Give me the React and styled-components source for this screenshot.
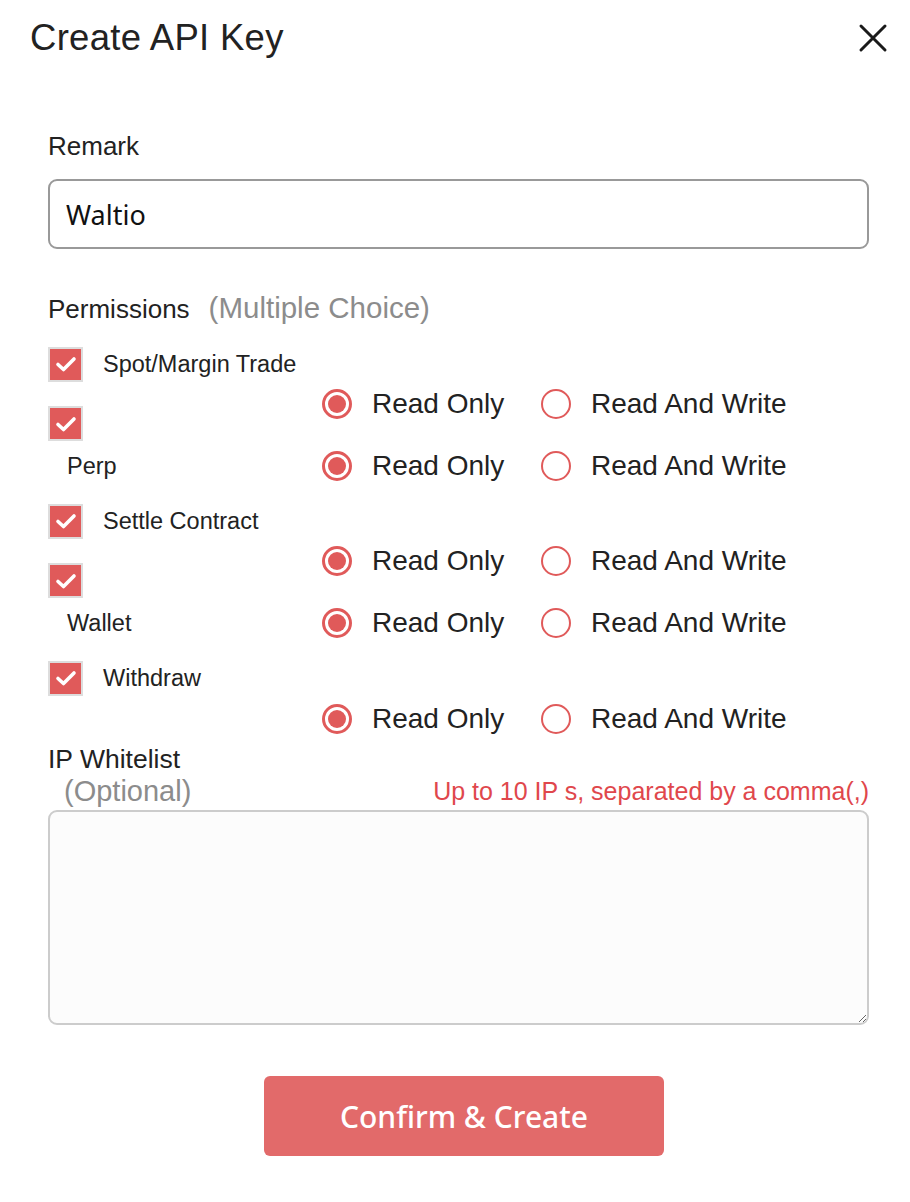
import React, { useState } from 'react';
import styled, { createGlobalStyle } from 'styled-components';

const GlobalStyle = createGlobalStyle`
  body {
    margin: 0;
    background: #fff;
    font-family: "Liberation Sans", Arial, sans-serif;
    color: #222;
  }
`;

const RED = '#e05a5a';

const permissionBlocks = [
  { top: 'Spot/Margin Trade', bottom: 'Perp' },
  { top: 'Settle Contract', bottom: 'Wallet' },
];

export default function App() {
  const [remark, setRemark] = useState('Waltio');
  const [access, setAccess] = useState({
    spot: 'read', perp: 'read', settle: 'read', wallet: 'read', withdraw: 'read',
  });

  const keys = [['spot', 'perp'], ['settle', 'wallet']];

  const radios = (key) => (
    <RadioGroup>
      <RadioOption onClick={() => setAccess({ ...access, [key]: 'read' })}>
        <Radio checked={access[key] === 'read'} />
        <RadioText>Read Only</RadioText>
      </RadioOption>
      <RadioOption onClick={() => setAccess({ ...access, [key]: 'write' })}>
        <Radio checked={access[key] === 'write'} />
        <RadioText>Read And Write</RadioText>
      </RadioOption>
    </RadioGroup>
  );

  return (
    <>
      <GlobalStyle />
      <Modal>
        <Header>
          <Title>Create API Key</Title>
          <CloseButton aria-label="close">
            <svg width="30" height="30" viewBox="0 0 30 30">
              <path d="M3 3 L27 27 M27 3 L3 27" stroke="#1a1a1a" strokeWidth="3" strokeLinecap="round" />
            </svg>
          </CloseButton>
        </Header>

        <Body>
          <FieldLabel>Remark</FieldLabel>
          <TextInput autoFocus value={remark} onChange={(e) => setRemark(e.target.value)} />

          <PermLabel>
            Permissions<Muted>(Multiple Choice)</Muted>
          </PermLabel>

          <Permissions>
            {permissionBlocks.map((block, i) => (
              <PairBlock key={block.top}>
                <HeadRow>
                  <Checkbox />
                  <CheckText>{block.top}</CheckText>
                </HeadRow>
                <MidRow>
                  <LeftCell>
                    <Checkbox offset />
                  </LeftCell>
                  {radios(keys[i][0])}
                </MidRow>
                <BottomRow>
                  <LeftCell>
                    <SubText>{block.bottom}</SubText>
                  </LeftCell>
                  {radios(keys[i][1])}
                </BottomRow>
              </PairBlock>
            ))}
            <PairBlock>
              <HeadRow>
                <Checkbox />
                <CheckText>Withdraw</CheckText>
              </HeadRow>
              <BottomRow tight>
                <LeftCell />
                {radios('withdraw')}
              </BottomRow>
            </PairBlock>
          </Permissions>

          <IpLabel>IP Whitelist</IpLabel>
          <IpSubRow>
            <Optional>(Optional)</Optional>
            <Hint>Up to 10 IP s, separated by a comma(,)</Hint>
          </IpSubRow>
          <TextArea />

          <SubmitButton>Confirm &amp; Create</SubmitButton>
        </Body>
      </Modal>
    </>
  );
}

function Checkbox({ offset }) {
  return (
    <CheckBox offset={offset ? 1 : 0}>
      <svg width="24" height="24" viewBox="0 0 24 24">
        <path d="M4 12.5 L9.5 17.5 L20 7" fill="none" stroke="#fff" strokeWidth="3.6" strokeLinecap="round" strokeLinejoin="round" />
      </svg>
    </CheckBox>
  );
}

const Modal = styled.div`
width: 910px;
height: 1202px;
background: #fff;
`

const Header = styled.div`
height: 76px;
display: flex;
align-items: center;
justify-content: space-between;
padding: 0 22px 0 30px;
box-sizing: border-box;
`

const Title = styled.h1`
margin: 0;
font-size: 36.5px;
font-weight: 400;
color: #222;
letter-spacing: 0.3px;
`

const CloseButton = styled.button`
border: none;
background: none;
padding: 0;
width: 30px;
height: 30px;
cursor: pointer;
display: flex;
`

// ---------------------------------------------------

const Body = styled.div`
padding: 0 41px 0 48px;
display: flex;
flex-direction: column;
`

const FieldLabel = styled.div`
margin-top: 55px;
font-size: 26px;
line-height: 30px;
color: #222;
`

const TextInput = styled.input`
margin-top: 18px;
height: 70px;
box-sizing: border-box;
border: 2px solid #999;
border-radius: 9px;
padding: 0 16px;
font-family: "Noto Sans", sans-serif;
font-size: 27px;
color: #111;
outline: none;
caret-color: #111;
`

const PermLabel = styled.div`
margin-top: 44px;
font-size: 26px;
line-height: 30px;
color: #222;
`

const Muted = styled.span`
margin-left: 19px;
font-size: 29.5px;
color: #8c8c8c;
`

// ---------------------------------------------------

const Permissions = styled.div`
margin-top: 23px;
display: flex;
flex-direction: column;
gap: 23px;
`

const PairBlock = styled.div`
display: flex;
flex-direction: column;
`

const HeadRow = styled.div`
display: flex;
align-items: center;
gap: 20px;
height: 34px;
`

const MidRow = styled.div`
display: flex;
align-items: flex-start;
margin-top: 8px;
`

const BottomRow = styled.div`
display: flex;
align-items: center;
margin-top: ${props => props.tight ? '9px' : '10px'};
`

const LeftCell = styled.div`
width: 274px;
flex-shrink: 0;
`

const CheckBox = styled.div`
width: 35px;
height: 35px;
box-sizing: border-box;
border: 2px solid #ddd;
background: ${RED};
background-clip: padding-box;
display: flex;
align-items: center;
justify-content: center;
margin-top: ${props => props.offset ? '17px' : '0'};
flex-shrink: 0;
`

const CheckText = styled.span`
font-size: 23.5px;
color: #222;
`

const SubText = styled.span`
display: block;
padding-left: 19px;
font-size: 23.5px;
color: #222;
`

const RadioGroup = styled.div`
display: flex;
`

const RadioOption = styled.label`
width: 219px;
display: flex;
align-items: center;
gap: 20px;
height: 30px;
cursor: pointer;
`

const Radio = styled.span`
width: 30px;
height: 30px;
box-sizing: border-box;
border-radius: 50%;
border: ${props => props.checked ? '3px' : '2.5px'} solid ${RED};
display: flex;
align-items: center;
justify-content: center;
flex-shrink: 0;
&::after {
  content: "";
  display: ${props => props.checked ? 'block' : 'none'};
  width: 18px;
  height: 18px;
  border-radius: 50%;
  background: ${RED};
}
`

const RadioText = styled.span`
font-size: 28px;
color: #222;
white-space: nowrap;
`

// ---------------------------------------------------

const IpLabel = styled.div`
margin-top: 10px;
font-size: 26.5px;
line-height: 30px;
color: #222;
`

const IpSubRow = styled.div`
display: flex;
justify-content: space-between;
align-items: center;
height: 34px;
`

const Optional = styled.span`
padding-left: 16px;
font-size: 29px;
color: #8c8c8c;
`

const Hint = styled.span`
font-size: 25px;
color: #e0474c;
`

const TextArea = styled.textarea`
margin-top: 2px;
height: 215px;
box-sizing: border-box;
border: 2px solid #ccc;
border-radius: 9px;
background: #fcfcfc;
outline: none;
font-family: "Liberation Sans", sans-serif;
font-size: 22px;
padding: 12px;
`

const SubmitButton = styled.button`
margin: 51px 0 0 216px;
width: 400px;
height: 80px;
border: none;
border-radius: 6px;
background: #e26a6a;
color: #fff;
font-family: "Noto Sans", sans-serif;
font-size: 30px;
font-weight: 500;
cursor: pointer;
`
